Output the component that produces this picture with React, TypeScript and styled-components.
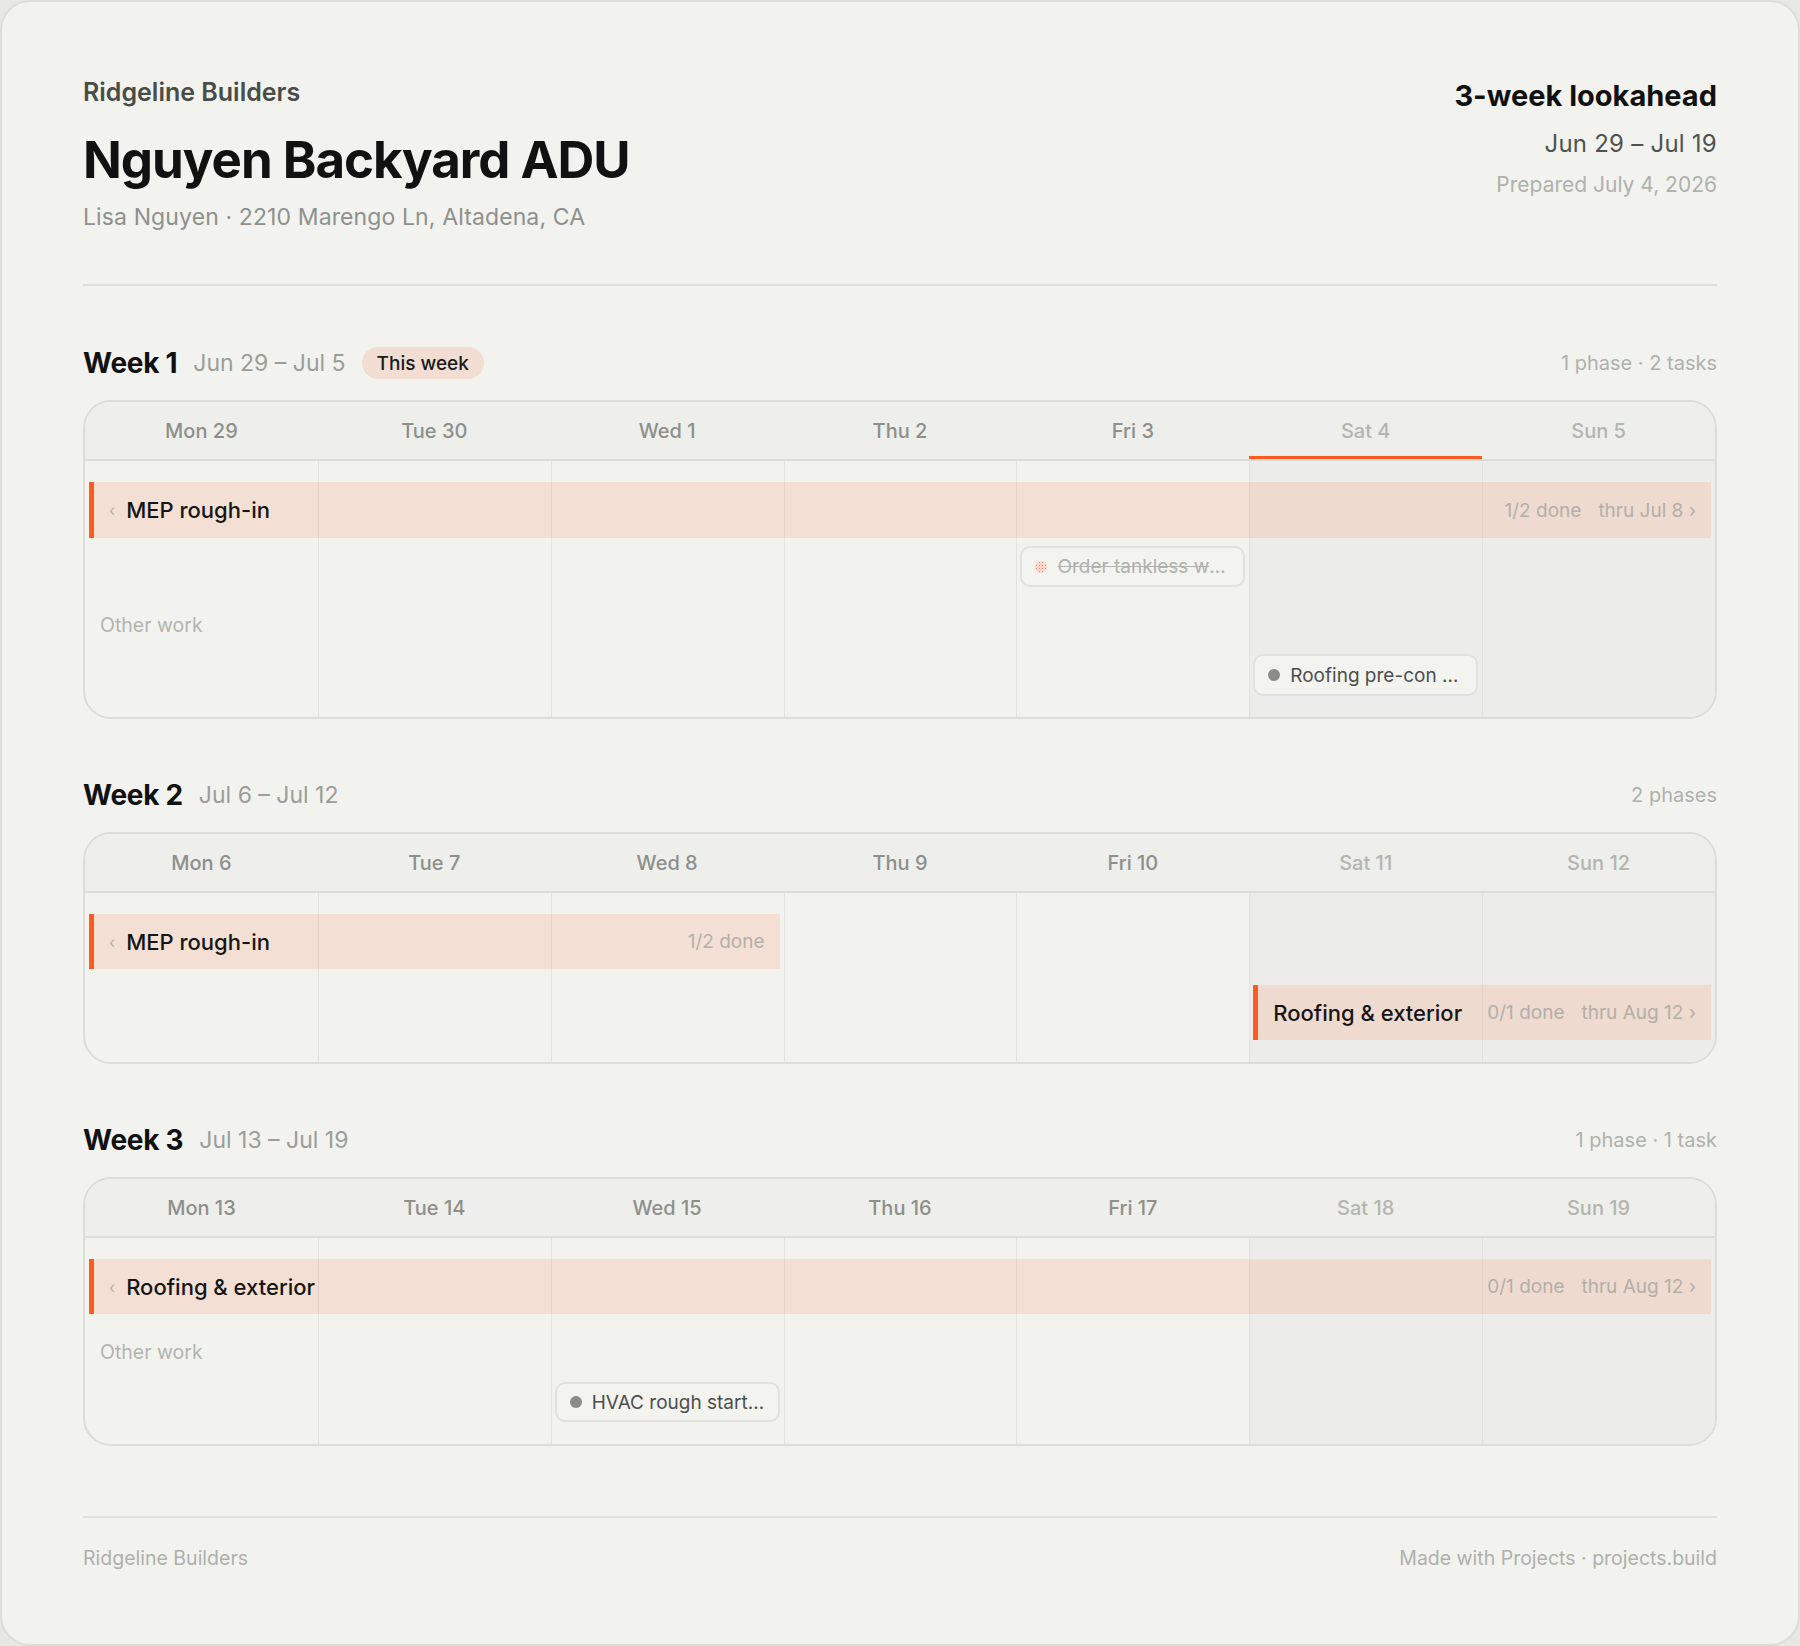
import React from 'react';
import styled, { createGlobalStyle, css } from 'styled-components';

const GlobalStyle = createGlobalStyle`
  html, body { margin: 0; padding: 0; background: #e7e8e4; }
  body { font-family: Inter, "Noto Sans", sans-serif; color: #141414; -webkit-font-smoothing: antialiased; }
  * { box-sizing: border-box; }
`;

const Page = styled.div`
  width: 1800px;
  height: 1646px;
  background: #f2f3ef;
  border: 2px solid #dcddd9;
  border-radius: 30px;
  padding: 76px 81px 0;
  display: flex;
  flex-direction: column;
`;

const Header = styled.header`
  display: flex;
  justify-content: space-between;
  align-items: flex-start;
  padding-bottom: 53px;
  border-bottom: 2px solid #dfe0dc;
`;

const HeadLeft = styled.div`
  display: flex;
  flex-direction: column;
`;

const Company = styled.div`
  font-size: 25px;
  line-height: 28px;
  font-weight: 600;
  color: #4a4c48;
`;

const Title = styled.h1`
  margin: 26px 0 0;
  font-size: 51px;
  line-height: 56px;
  font-weight: 700;
  letter-spacing: -0.02em;
  color: #111;
`;

const Subtitle = styled.div`
  margin-top: 15px;
  font-size: 23px;
  line-height: 28px;
  letter-spacing: 0.005em;
  color: #8e908c;
`;

const HeadRight = styled.div`
  display: flex;
  flex-direction: column;
  align-items: flex-end;
`;

const Lookahead = styled.div`
  margin-top: 2px;
  font-size: 29px;
  line-height: 32px;
  font-weight: 700;
  color: #111;
`;

const Range = styled.div`
  margin-top: 18px;
  font-size: 24px;
  line-height: 28px;
  letter-spacing: 0.01em;
  color: #50524e;
`;

const Prepared = styled.div`
  margin-top: 14px;
  font-size: 21px;
  line-height: 26px;
  color: #afb1ad;
`;

const Weeks = styled.div`
  display: flex;
  flex-direction: column;
  gap: 60px;
  padding-top: 61px;
`;

const WeekSection = styled.section`
  display: flex;
  flex-direction: column;
  gap: 21px;
`;

const WeekHead = styled.div`
  display: flex;
  align-items: center;
  gap: 16px;
  height: 32px;
`;

const WeekTitle = styled.h2`
  margin: 0;
  font-size: 28px;
  font-weight: 700;
  letter-spacing: -0.01em;
  color: #111;
`;

const WeekRange = styled.span`
  font-size: 23px;
  color: #9b9d99;
`;

const Badge = styled.span`
  height: 32px;
  display: inline-flex;
  align-items: center;
  padding: 0 15px;
  border-radius: 16px;
  background: #f1ddd2;
  font-size: 19px;
  font-weight: 500;
  color: #1a1a1a;
`;

const WeekMeta = styled.span`
  margin-left: auto;
  font-size: 20px;
  color: #afb1ad;
`;

const Calendar = styled.div`
  border: 2px solid #dcddd9;
  border-radius: 28px;
  overflow: hidden;
  background: #f2f3ef;
`;

const DayHeadRow = styled.div`
  display: grid;
  grid-template-columns: repeat(7, 1fr);
  height: 59px;
  background: #eeefeb;
  border-bottom: 2px solid #dcddd9;
`;

const DayHead = styled.div<{ $weekend: boolean; $today: boolean }>`
  display: flex;
  align-items: center;
  justify-content: center;
  font-size: 20px;
  font-weight: 500;
  color: ${p => (p.$weekend ? '#b3b5b1' : '#8d8f8b')};
  ${p => p.$today && css`box-shadow: inset 0 -3px 0 #ff5a1f;`}
`;

const Body = styled.div<{ $rows: string }>`
  display: grid;
  grid-template-columns: repeat(7, 1fr);
  grid-template-rows: ${p => p.$rows};
`;

const DayCol = styled.div<{ $col: number; $weekend: boolean }>`
  grid-column: ${p => p.$col};
  grid-row: 1 / -1;
  background: ${p => (p.$weekend ? '#ecedea' : 'transparent')};
  border-left: ${p => (p.$col > 1 ? '1px solid #e2e3df' : 'none')};
`;

const PhaseBar = styled.div<{ $start: number; $end: number; $row: number }>`
  grid-column: ${p => `${p.$start} / ${p.$end}`};
  grid-row: ${p => p.$row};
  margin: 0 4px;
  display: flex;
  align-items: center;
  min-width: 0;
  background: rgba(255, 90, 31, 0.13);
  border-left: 5px solid #ff5a1f;
  padding: 0 15px 0 15px;
  white-space: nowrap;
`;

const Chevron = styled.span`
  font-size: 16px;
  color: #b4b2ad;
  margin-right: 11px;
`;

const PhaseTitle = styled.span`
  font-size: 22px;
  font-weight: 500;
  color: #151515;
`;

const PhaseMeta = styled.span`
  margin-left: auto;
  padding-left: 22px;
  display: flex;
  gap: 17px;
  font-size: 19px;
  color: #b3afa9;
`;

const OtherLabel = styled.div<{ $row: number }>`
  grid-column: 1;
  grid-row: ${p => p.$row};
  align-self: start;
  padding: 26px 0 0 15px;
  font-size: 19.5px;
  line-height: 24px;
  color: #b3b4b0;
`;

const Chip = styled.div<{ $col: number; $row: number }>`
  grid-column: ${p => p.$col};
  grid-row: ${p => p.$row};
  margin: 0 4px;
  min-width: 0;
  display: flex;
  align-items: center;
  gap: 10px;
  padding: 0 12px 0 13px;
  border: 2px solid #e1e2de;
  border-radius: 10px;
  background: #f3f4f0;
`;

const Dot = styled.span<{ $done: boolean }>`
  flex: none;
  width: 12px;
  height: 12px;
  border-radius: 50%;
  background: ${p =>
    p.$done
      ? 'radial-gradient(circle, #ef8a62 40%, transparent 45%) 0 0 / 3px 3px, #f7d8ca'
      : '#8b8c88'};
`;

const ChipText = styled.span<{ $done: boolean }>`
  min-width: 0;
  overflow: hidden;
  text-overflow: ellipsis;
  white-space: nowrap;
  font-size: 19px;
  color: ${p => (p.$done ? '#b0b1ad' : '#4d4e4b')};
  text-decoration: ${p => (p.$done ? 'line-through' : 'none')};
`;

const Footer = styled.footer`
  margin-top: 70px;
  border-top: 2px solid #e1e2de;
  padding-top: 28px;
  display: flex;
  justify-content: space-between;
  font-size: 19.5px;
  line-height: 24px;
  color: #aeb0ac;
`;

type Bar = { title: string; start: number; end: number; row: number; cont?: boolean; done: string; thru?: string };
type Task = { text: string; col: number; row: number; done?: boolean };
type Week = {
  label: string;
  range: string;
  badge?: string;
  meta: string;
  days: string[];
  today?: number;
  rows: string;
  bars: Bar[];
  tasks: Task[];
  otherRow?: number;
};

const weeks: Week[] = [
  {
    label: 'Week 1',
    range: 'Jun 29 – Jul 5',
    badge: 'This week',
    meta: '1 phase · 2 tasks',
    days: ['Mon 29', 'Tue 30', 'Wed 1', 'Thu 2', 'Fri 3', 'Sat 4', 'Sun 5'],
    today: 5,
    rows: '21px 56px 8px 41px 67px 42px 21px',
    bars: [{ title: 'MEP rough-in', start: 1, end: 8, row: 2, cont: true, done: '1/2 done', thru: 'thru Jul 8 ›' }],
    tasks: [
      { text: 'Order tankless water heater', col: 5, row: 4, done: true },
      { text: 'Roofing pre-con meeting', col: 6, row: 6 },
    ],
    otherRow: 5,
  },
  {
    label: 'Week 2',
    range: 'Jul 6 – Jul 12',
    meta: '2 phases',
    days: ['Mon 6', 'Tue 7', 'Wed 8', 'Thu 9', 'Fri 10', 'Sat 11', 'Sun 12'],
    rows: '21px 55px 16px 55px 22px',
    bars: [
      { title: 'MEP rough-in', start: 1, end: 4, row: 2, cont: true, done: '1/2 done' },
      { title: 'Roofing & exterior', start: 6, end: 8, row: 4, done: '0/1 done', thru: 'thru Aug 12 ›' },
    ],
    tasks: [],
  },
  {
    label: 'Week 3',
    range: 'Jul 13 – Jul 19',
    meta: '1 phase · 1 task',
    days: ['Mon 13', 'Tue 14', 'Wed 15', 'Thu 16', 'Fri 17', 'Sat 18', 'Sun 19'],
    rows: '21px 55px 68px 40px 22px',
    bars: [{ title: 'Roofing & exterior', start: 1, end: 8, row: 2, cont: true, done: '0/1 done', thru: 'thru Aug 12 ›' }],
    tasks: [{ text: 'HVAC rough start – ductwork', col: 3, row: 4 }],
    otherRow: 3,
  },
];

function WeekBlock({ week }: { week: Week }) {
  return (
    <WeekSection>
      <WeekHead>
        <WeekTitle>{week.label}</WeekTitle>
        <WeekRange>{week.range}</WeekRange>
        {week.badge && <Badge>{week.badge}</Badge>}
        <WeekMeta>{week.meta}</WeekMeta>
      </WeekHead>
      <Calendar>
        <DayHeadRow>
          {week.days.map((d, i) => (
            <DayHead key={d} $weekend={i >= 5} $today={week.today === i}>
              {d}
            </DayHead>
          ))}
        </DayHeadRow>
        <Body $rows={week.rows}>
          {week.days.map((d, i) => (
            <DayCol key={d} $col={i + 1} $weekend={i >= 5} />
          ))}
          {week.bars.map(b => (
            <PhaseBar key={b.title + b.start} $start={b.start} $end={b.end} $row={b.row}>
              {b.cont && <Chevron>‹</Chevron>}
              <PhaseTitle>{b.title}</PhaseTitle>
              <PhaseMeta>
                <span>{b.done}</span>
                {b.thru && <span>{b.thru}</span>}
              </PhaseMeta>
            </PhaseBar>
          ))}
          {week.otherRow && <OtherLabel $row={week.otherRow}>Other work</OtherLabel>}
          {week.tasks.map(t => (
            <Chip key={t.text} $col={t.col} $row={t.row}>
              <Dot $done={!!t.done} />
              <ChipText $done={!!t.done}>{t.text}</ChipText>
            </Chip>
          ))}
        </Body>
      </Calendar>
    </WeekSection>
  );
}

export default function App() {
  return (
    <>
      <GlobalStyle />
      <Page>
        <Header>
          <HeadLeft>
            <Company>Ridgeline Builders</Company>
            <Title>Nguyen Backyard ADU</Title>
            <Subtitle>Lisa Nguyen · 2210 Marengo Ln, Altadena, CA</Subtitle>
          </HeadLeft>
          <HeadRight>
            <Lookahead>3-week lookahead</Lookahead>
            <Range>Jun 29 – Jul 19</Range>
            <Prepared>Prepared July 4, 2026</Prepared>
          </HeadRight>
        </Header>
        <Weeks>
          {weeks.map(w => (
            <WeekBlock key={w.label} week={w} />
          ))}
        </Weeks>
        <Footer>
          <span>Ridgeline Builders</span>
          <span>Made with Projects · projects.build</span>
        </Footer>
      </Page>
    </>
  );
}
